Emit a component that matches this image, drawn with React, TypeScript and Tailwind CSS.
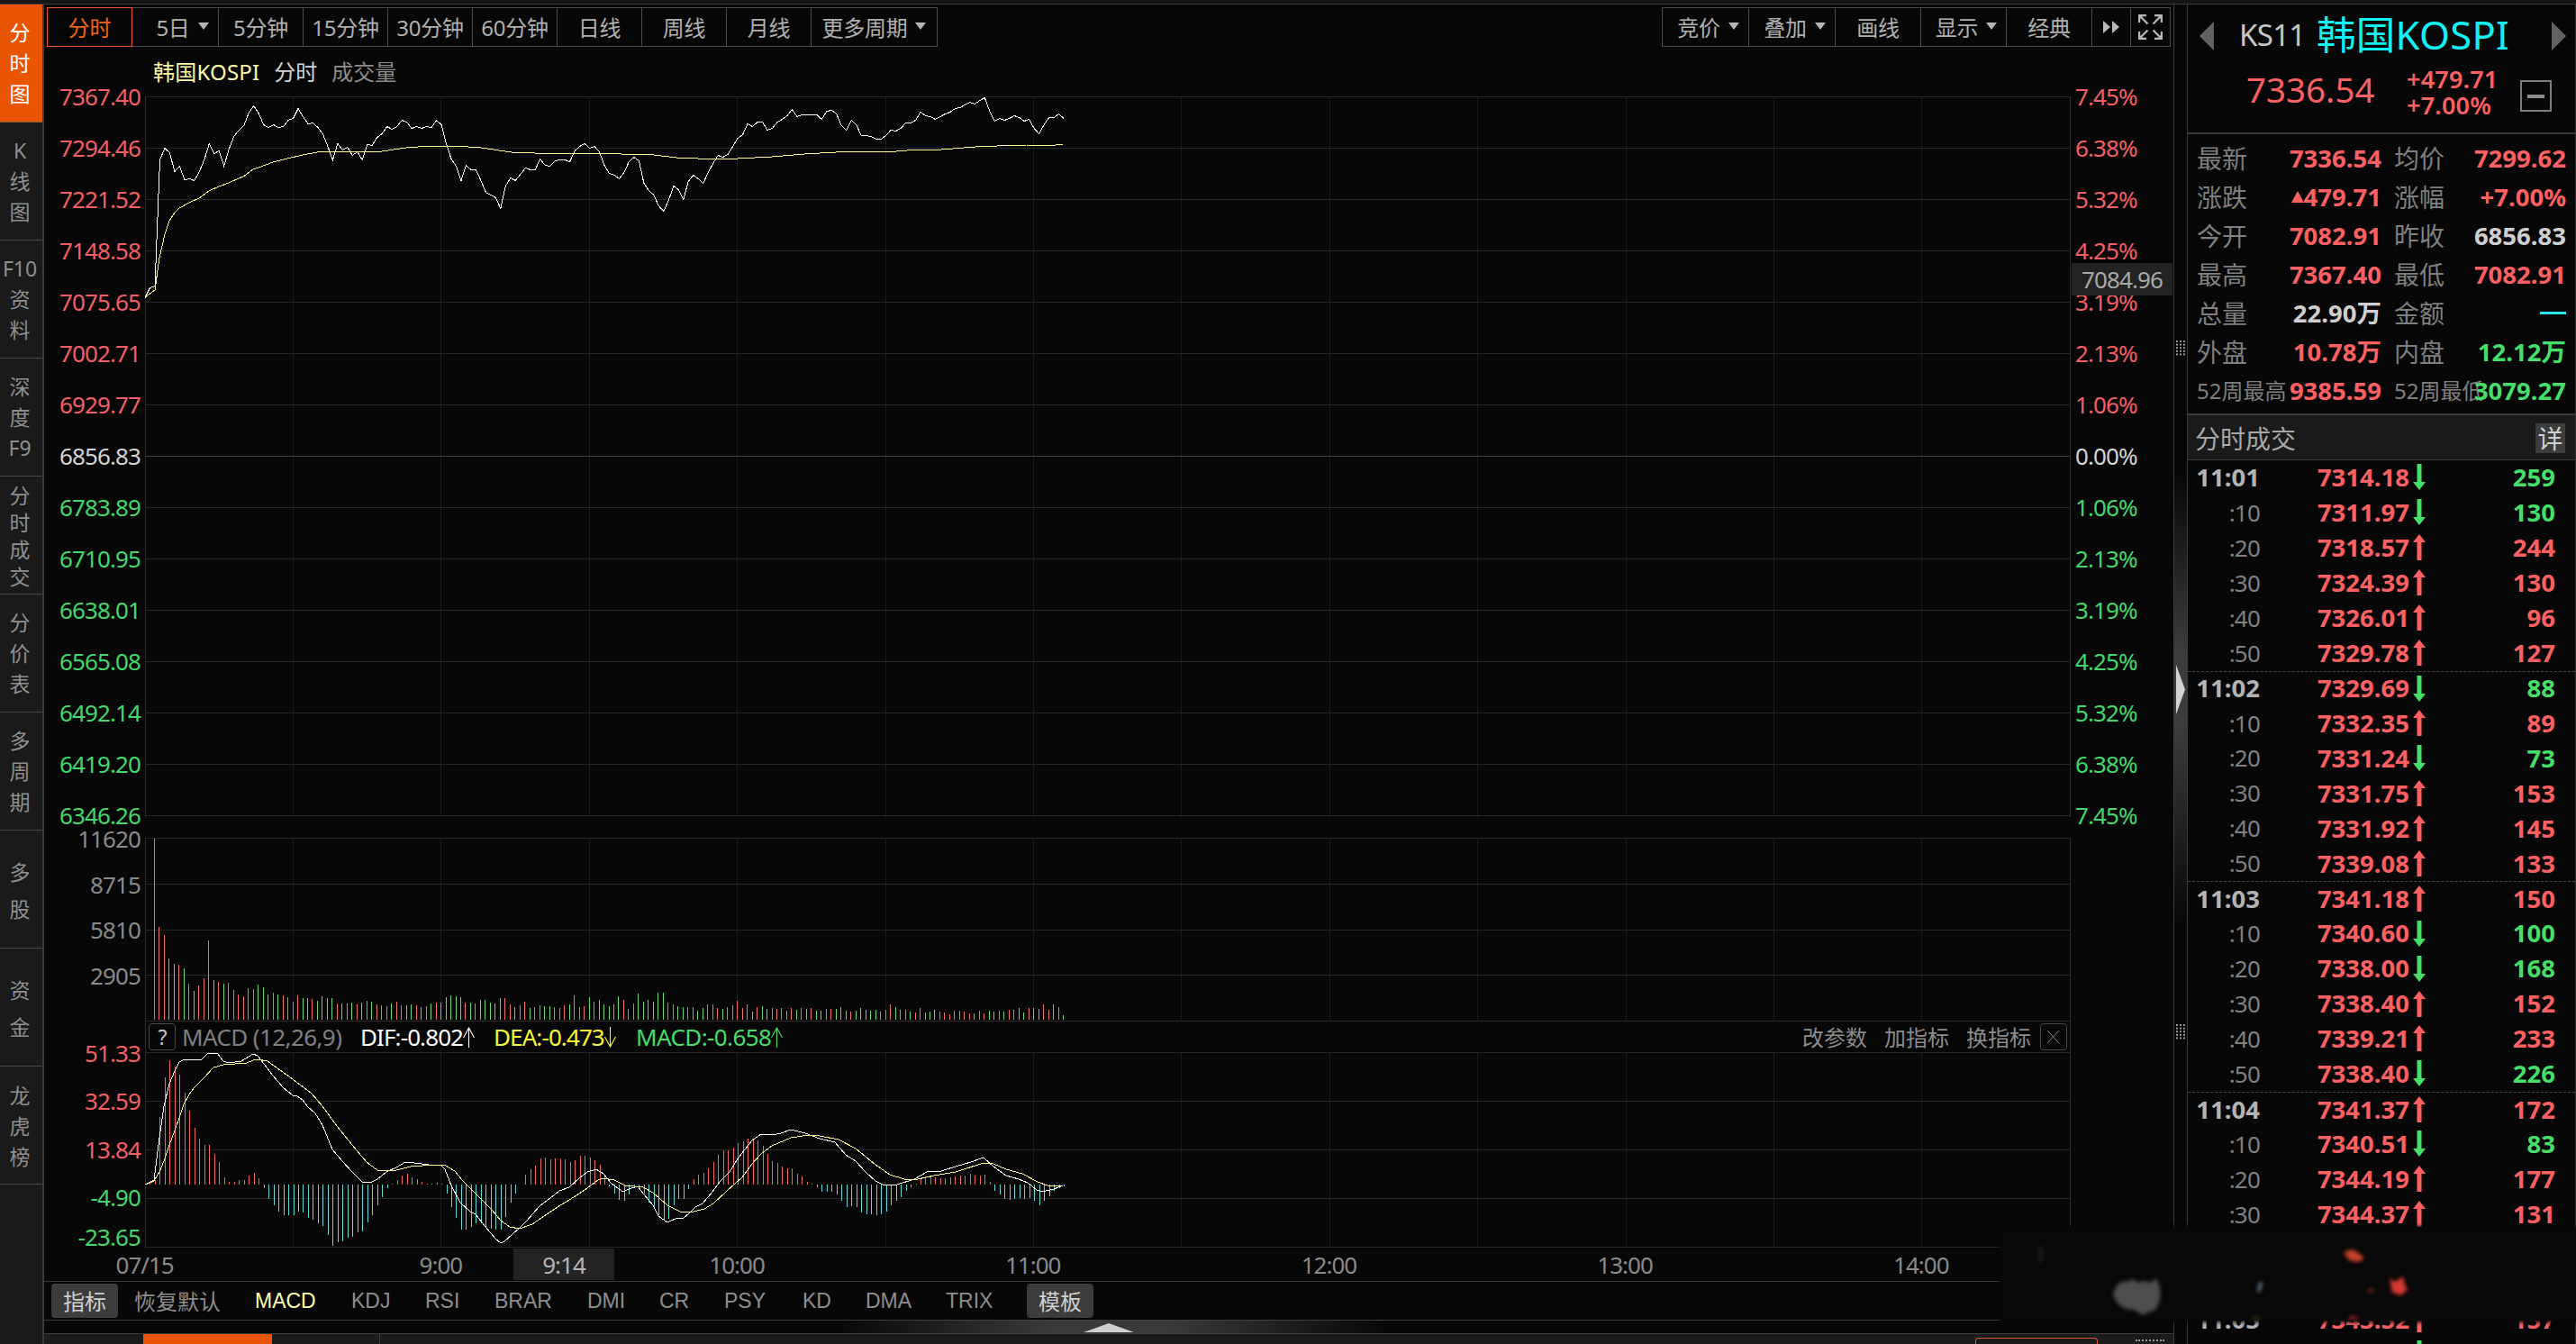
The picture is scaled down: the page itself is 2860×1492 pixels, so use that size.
import type { ReactNode } from "react";

interface Tick {
  time: string;
  price: string;
  up: boolean;
  volume: number;
}

interface Quote {
  label: string;
  value: string;
  color: string;
}

const RED = "#ff6062";
const GREEN = "#45df69";

// One minute on the time axis, in px
const STEP = 5.484;
const GRID_X = 164.4;
const CHART_W = 2138;

const SIDE_TABS = [
  { chars: ["K", "线", "图"], leading: "leading-[34px]" },
  { chars: ["F10", "资", "料"], leading: "leading-[34px]" },
  { chars: ["深", "度", "F9"], leading: "leading-[34px]" },
  { chars: ["分", "时", "成", "交"], leading: "leading-[30px] pt-px" },
  { chars: ["分", "价", "表"], leading: "leading-[34px]" },
  { chars: ["多", "周", "期"], leading: "leading-[34px]" },
  { chars: ["多", "股"], leading: "leading-[41px] pt-1" },
  { chars: ["资", "金"], leading: "leading-[41px] pt-1" },
  { chars: ["龙", "虎", "榜"], leading: "leading-[34px] pt-0.5" },
];

const PERIODS = [
  { label: "5日", width: "w-[96px] pl-4", caret: true },
  { label: "5分钟", width: "w-[94px]" },
  { label: "15分钟", width: "w-[94px]" },
  { label: "30分钟", width: "w-[94px]" },
  { label: "60分钟", width: "w-[94px]" },
  { label: "日线", width: "w-[94px]" },
  { label: "周线", width: "w-[94px]" },
  { label: "月线", width: "w-[94px]" },
  { label: "更多周期", width: "w-[140px]", caret: true },
];

const TOOLS = [
  { label: "竞价", width: "w-[96px] pl-1.5", caret: true },
  { label: "叠加", width: "w-[96px] pl-1.5", caret: true },
  { label: "画线", width: "w-[95px]" },
  { label: "显示", width: "w-[95px] pl-1.5", caret: true },
  { label: "经典", width: "w-[95px]" },
];

const PRICE_LABELS = [
  "7367.40", "7294.46", "7221.52", "7148.58", "7075.65", "7002.71", "6929.77", "6856.83",
  "6783.89", "6710.95", "6638.01", "6565.08", "6492.14", "6419.20", "6346.26",
];

const PERCENT_LABELS = [
  "7.45%", "6.38%", "5.32%", "4.25%", "3.19%", "2.13%", "1.06%", "0.00%",
  "1.06%", "2.13%", "3.19%", "4.25%", "5.32%", "6.38%", "7.45%",
];

const VOLUME_LABELS = ["11620", "8715", "5810", "2905"];
const HOURS = ["9:00", "10:00", "11:00", "12:00", "13:00", "14:00"];

// Distance below the top grid line, one entry per minute
const PRICE = [
  223, 212, 210, 70, 57, 62, 83, 77, 92, 91, 93, 83, 70, 52, 63, 60, 77, 58, 44, 37,
  32, 18, 10, 18, 31, 34, 31, 34, 33, 26, 24, 13, 22, 30, 29, 34, 41, 55, 70, 52,
  59, 56, 65, 61, 70, 53, 54, 45, 41, 33, 36, 33, 26, 28, 35, 33, 35, 33, 34, 26,
  31, 52, 69, 77, 93, 76, 81, 81, 93, 106, 109, 112, 124, 99, 90, 93, 86, 79, 81, 81,
  69, 76, 77, 71, 70, 70, 72, 60, 55, 52, 57, 55, 61, 76, 85, 87, 91, 84, 72, 67,
  71, 96, 104, 109, 121, 127, 115, 99, 103, 114, 94, 87, 91, 96, 84, 74, 65, 67, 64, 55,
  46, 42, 30, 33, 28, 28, 37, 35, 28, 25, 21, 14, 22, 20, 20, 20, 20, 25, 16, 15,
  19, 32, 37, 26, 31, 43, 43, 44, 47, 47, 43, 37, 38, 35, 29, 29, 26, 17, 21, 22,
  25, 22, 19, 17, 13, 12, 9, 6, 8, 4, 1, 16, 27, 24, 26, 24, 21, 23, 27, 25,
  35, 41, 31, 23, 23, 19, 24,
];

const AVERAGE =
  "0,223 11,215 16,179 22,153 27,138 33,129 38,124 49,118 60,113 71,105 82,100 93,96 104,91 109,89 120,81 126,79 142,73 158,69 175,65 197,61 263,61 290,57 316,55 345,55 373,57 407,62 433,63 515,63 529,64 550,64 565,65 590,68 614,69 658,69 696,67 732,64 767,62 794,61 834,61 858,59 884,59 922,56 946,55 979,54 1011,54 1019,53";

// Bar heights; negative means a falling minute
const VOLUME = [
  201, 103, 94, -68, -62, 61, -57, 40, -32, 38, 46, 88, -44, 42, -40, 41, 33, 28, 26, 35,
  34, -39, -36, -28, 30, -28, 27, 25, 20, 27, -24, -24, 23, -21, -26, -24, -24, 18, -18, 18,
  -19, 17, -19, 21, -20, 17, 16, 15, -18, 20, 16, -16, -17, 16, -14, 15, -18, 19, -19, -25,
  -27, -26, -25, 19, -19, 18, -22, -22, -19, -18, -24, 24, 17, -14, 16, 20, -13, 14, 16, -15,
  -15, 14, 13, 16, -17, 27, 14, 15, -25, 20, -22, -17, -15, -17, -26, 22, 12, 18, -29, -20,
  -22, -20, -30, -30, 19, 17, -15, -14, 14, 14, -10, -13, 17, 17, 13, -12, 14, 16, 21, 13,
  17, -9, 14, -15, -12, 13, 12, 13, 10, 13, -11, 13, -12, 13, -10, -10, 12, 12, -12, -14,
  -10, 9, -10, -13, -11, -10, -11, 9, 11, 17, -14, 11, 11, -9, 8, 13, -8, -9, -11, 9,
  8, 6, 10, 10, 9, 7, -7, 10, 7, -10, -9, 10, -9, 11, 11, -13, -8, 13, -13, -12,
  17, 11, -17, 14, -5,
];

const MACD_BARS = [
  0, 2, 5, 75, 119, 138, 131, 122, 102, 82, 63, 51, 44, 44, 34, 25, 8, 3, 3, 5,
  5, 10, 13, 7, -4, -16, -23, -30, -34, -34, -34, -30, -31, -37, -39, -43, -46, -56, -68, -64,
  -63, -59, -58, -53, -52, -42, -34, -23, -14, -4, 1, 5, 10, 12, 8, 6, 3, 1, 1, 2,
  1, -10, -25, -37, -50, -50, -47, -43, -43, -47, -49, -50, -50, -36, -20, -10, 0, 11, 17, 21,
  29, 30, 28, 29, 29, 28, 25, 27, 32, 32, 30, 27, 22, 10, -2, -10, -17, -18, -11, -4,
  -3, -10, -20, -27, -34, -40, -38, -23, -16, -16, -5, 6, 11, 13, 18, 25, 33, 38, 38, 41,
  46, 48, 51, 51, 49, 43, 34, 26, 24, 20, 18, 18, 12, 9, 3, 1, -3, -8, -8, -8,
  -11, -18, -25, -24, -25, -31, -33, -33, -34, -33, -30, -23, -18, -14, -7, -3, 1, 6, 9, 9,
  8, 7, 7, 8, 9, 10, 10, 12, 10, 10, 11, 3, -7, -11, -16, -17, -16, -15, -16, -15,
  -18, -23, -18, -13, -7, -4, -2,
];

const DIF =
  "0,147 10,142 13,118 16,95 21,60 27,35 33,21 38,11 44,8 50,8 55,9 63,8 70,1 81,2 87,10 93,12 107,10 120,2 125,4 132,13 142,26 153,39 164,48 169,49 175,53 180,60 189,68 197,81 208,108 219,121 230,133 241,144 252,144 258,141 268,133 279,128 289,122 299,123 315,125 328,125 333,130 340,148 350,167 361,177 367,180 378,194 389,207 395,212 399,210 416,195 424,187 438,171 450,162 460,154 471,150 482,140 491,133 501,130 509,135 517,145 526,152 531,155 537,152 547,149 554,158 564,170 570,182 580,189 591,184 597,185 605,178 611,172 619,168 630,155 639,143 649,133 657,120 666,108 674,98 684,91 696,92 706,90 717,86 733,90 749,96 766,100 778,114 789,121 800,133 811,143 821,148 835,147 854,141 868,133 884,132 900,127 917,122 931,117 942,127 956,137 970,141 980,145 990,153 996,155 1009,152 1019,148";

const DEA =
  "0,147 10,143 16,133 21,121 27,103 33,87 38,73 43,58 49,47 55,39 66,28 76,17 87,14 113,12 120,9 125,8 136,10 150,20 164,30 185,46 197,60 213,82 230,103 246,122 258,131 264,132 279,131 295,127 321,125 332,125 344,132 352,142 368,158 385,175 395,187 405,194 416,196 430,191 443,182 458,172 476,161 491,151 503,142 509,140 521,142 533,148 553,150 564,156 580,170 594,177 605,178 621,174 631,168 646,154 663,139 674,124 684,113 696,104 717,95 737,92 749,93 770,97 789,107 811,125 827,136 843,141 858,141 876,137 900,133 931,123 942,124 956,130 974,135 991,144 1002,148 1019,149";

const INDICATORS = [
  { label: "KDJ", width: "w-[82px]" },
  { label: "RSI", width: "w-[77px]" },
  { label: "BRAR", width: "w-[103px]" },
  { label: "DMI", width: "w-[80px]" },
  { label: "CR", width: "w-[72px]" },
  { label: "PSY", width: "w-[87px]" },
  { label: "KD", width: "w-[70px]" },
  { label: "DMA", width: "w-[89px]" },
  { label: "TRIX", width: "w-[90px]" },
];

const QUOTES: [Quote, Quote][] = [
  [
    { label: "最新", value: "7336.54", color: "text-[#ff6062]" },
    { label: "均价", value: "7299.62", color: "text-[#ff6062]" },
  ],
  [
    { label: "涨跌", value: "479.71", color: "text-[#ff6062]" },
    { label: "涨幅", value: "+7.00%", color: "text-[#ff6062]" },
  ],
  [
    { label: "今开", value: "7082.91", color: "text-[#ff6062]" },
    { label: "昨收", value: "6856.83", color: "text-[#d0d0d0]" },
  ],
  [
    { label: "最高", value: "7367.40", color: "text-[#ff6062]" },
    { label: "最低", value: "7082.91", color: "text-[#ff6062]" },
  ],
  [
    { label: "总量", value: "22.90万", color: "text-[#d0d0d0]" },
    { label: "金额", value: "", color: "text-[#2ee6ea]" },
  ],
  [
    { label: "外盘", value: "10.78万", color: "text-[#ff6062]" },
    { label: "内盘", value: "12.12万", color: "text-[#45df69]" },
  ],
];

function tick(time: string, price: string, up: boolean, volume: number): Tick {
  return { time, price, up, volume };
}

const TICKS: Tick[] = [
  tick("11:01", "7314.18", false, 259),
  tick(":10", "7311.97", false, 130),
  tick(":20", "7318.57", true, 244),
  tick(":30", "7324.39", true, 130),
  tick(":40", "7326.01", true, 96),
  tick(":50", "7329.78", true, 127),
  tick("11:02", "7329.69", false, 88),
  tick(":10", "7332.35", true, 89),
  tick(":20", "7331.24", false, 73),
  tick(":30", "7331.75", true, 153),
  tick(":40", "7331.92", true, 145),
  tick(":50", "7339.08", true, 133),
  tick("11:03", "7341.18", true, 150),
  tick(":10", "7340.60", false, 100),
  tick(":20", "7338.00", false, 168),
  tick(":30", "7338.40", true, 152),
  tick(":40", "7339.21", true, 233),
  tick(":50", "7338.40", false, 226),
  tick("11:04", "7341.37", true, 172),
  tick(":10", "7340.51", false, 83),
  tick(":20", "7344.19", true, 177),
  tick(":30", "7344.37", true, 131),
];

function Caret() {
  return (
    <svg width="12" height="8" className="shrink-0 -mt-1 fill-[#b4b4b4]">
      <path d="M0 0H12L6 8Z" />
    </svg>
  );
}

function ToolButton({ label, width, caret }: { label: string; width: string; caret?: boolean }) {
  return (
    <button
      className={`${width} h-full shrink-0 flex items-center justify-center ${
        caret ? "gap-[9px]" : ""
      } border-r border-[#4b4b4b] pt-0.5 text-[24px] tracking-[-0.3px] leading-none whitespace-nowrap text-[#b0b0b0]`}
    >
      {label}
      {caret && <Caret />}
    </button>
  );
}

function Grid({ height, rows, gap, bright }: { height: number; rows: number; gap: number; bright?: number }) {
  return (
    <g shapeRendering="crispEdges">
      {Array.from({ length: 12 }, (_, i) => (
        <line key={i} x1={(i + 1) * GRID_X} x2={(i + 1) * GRID_X} y1={0} y2={height} stroke="#191a1a" />
      ))}
      {Array.from({ length: rows }, (_, i) => (
        <line
          key={i}
          x1={0}
          x2={CHART_W}
          y1={i * gap + 0.5}
          y2={i * gap + 0.5}
          stroke={i === bright ? "#454545" : "#262727"}
        />
      ))}
      <line x1={0.5} x2={0.5} y1={0} y2={height} stroke="#2e3030" />
      <line x1={CHART_W - 0.5} x2={CHART_W - 0.5} y1={0} y2={height} stroke="#2e3030" />
    </g>
  );
}

function Curve({ points, color }: { points: string; color: string }) {
  return <polyline points={points} fill="none" stroke={color} strokeWidth="1" shapeRendering="crispEdges" />;
}

function PriceChart() {
  const points = PRICE.map((y, i) => `${(i * STEP).toFixed(1)},${y + 0.5}`).join(" ");
  return (
    <svg width={CHART_W} height={800} className="block shrink-0">
      <Grid height={800} rows={15} gap={57} bright={7} />
      <Curve points={points} color="#ffffff" />
      <Curve points={AVERAGE} color="#fbf98e" />
    </svg>
  );
}

function VolumeChart() {
  return (
    <svg width={CHART_W} height={204} className="mt-[23px] block shrink-0">
      <Grid height={204} rows={5} gap={50.75} />
      <g shapeRendering="crispEdges">
        {VOLUME.map((v, i) => (
          <rect
            key={i}
            x={Math.round(10 + i * STEP)}
            y={202 - Math.abs(v)}
            width={1}
            height={Math.abs(v)}
            fill={v > 0 ? "#f0706c" : "#62d877"}
          />
        ))}
      </g>
    </svg>
  );
}

function MacdChart() {
  return (
    <svg width={CHART_W} height={217} className="block shrink-0">
      <Grid height={217} rows={5} gap={54} />
      <g shapeRendering="crispEdges">
        {MACD_BARS.map((v, i) => (
          <rect
            key={i}
            x={Math.round(i * STEP)}
            y={v > 0 ? 147 - v : 147}
            width={1}
            height={Math.abs(v)}
            fill={v > 0 ? "#f0655f" : "#5ed8da"}
          />
        ))}
      </g>
      <Curve points={DIF} color="#ffffff" />
      <Curve points={DEA} color="#fbf98e" />
    </svg>
  );
}

function ThinArrow({ up, color }: { up: boolean; color: string }) {
  return (
    <svg width="13" height="23" fill="none" stroke={color} strokeWidth="1.1">
      <path d={up ? "M6.5 23V1M0.5 12L6.5 1L12.5 12" : "M6.5 0V22M0.5 11L6.5 22L12.5 11"} />
    </svg>
  );
}

function MacdHeader() {
  return (
    <div className="h-[34px] shrink-0 flex items-center border-x border-[#2e3030] pl-[3px] pr-[3px] text-[26px] tracking-[-0.9px] leading-none">
      <span className="w-[30px] h-[30px] flex items-center justify-center rounded border border-[#484848] text-[23px] text-[#c8c8c8]">
        ?
      </span>
      <span className="ml-[7px] w-[198px] whitespace-nowrap tracking-[-0.6px] text-[#808080]">MACD (12,26,9)</span>
      <span className="w-[148px] flex items-center whitespace-nowrap text-white">
        DIF:-0.802
        <ThinArrow up color="#ffffff" />
      </span>
      <span className="w-[158px] flex items-center whitespace-nowrap text-[#fbfb2e]">
        DEA:-0.473
        <ThinArrow up={false} color="#fbfb2e" />
      </span>
      <span className="flex items-center whitespace-nowrap tracking-[-0.6px] text-[#45df69]">
        MACD:-0.658
        <ThinArrow up color="#45df69" />
      </span>
      <span className="ml-auto flex items-center gap-[19px] pt-px text-[24px] tracking-normal text-[#8c8c8c]">
        <span>改参数</span>
        <span>加指标</span>
        <span>换指标</span>
      </span>
      <svg width="30" height="30" className="ml-[10px]" fill="none">
        <rect x="0.5" y="0.5" width="29" height="29" rx="3" stroke="#4a4a4a" />
        <path d="M8 8L21 22M21 8L8 22" stroke="#8a8a8a" />
      </svg>
    </div>
  );
}

function AxisLabel({ children, className }: { children: ReactNode; className: string }) {
  return <div className={`flex items-center text-[26px] tracking-[-0.9px] leading-none ${className}`}>{children}</div>;
}

function sideColor(index: number): string {
  if (index === 7) return "text-[#d4d4d4]";
  return index < 7 ? "text-[#f55f64]" : "text-[#42d96a]";
}

function LeftAxis() {
  return (
    <div className="w-[112px] shrink-0 pr-[5px]">
      <div className="-mt-[29px]">
        {PRICE_LABELS.map((label, i) => (
          <AxisLabel key={label} className={`h-[57px] justify-end ${sideColor(i)}`}>
            {label}
          </AxisLabel>
        ))}
      </div>
      <div className="-mt-[27px]">
        {VOLUME_LABELS.map((label) => (
          <AxisLabel key={label} className="h-[50.5px] justify-end text-[#8a8a8a]">
            {label}
          </AxisLabel>
        ))}
      </div>
      <div className="mt-[34px]">
        <AxisLabel className="h-[53.5px] justify-end text-[#f55f64]">51.33</AxisLabel>
        <AxisLabel className="h-[53.5px] justify-end text-[#f55f64]">32.59</AxisLabel>
        <AxisLabel className="h-[53.5px] justify-end text-[#f55f64]">13.84</AxisLabel>
        <AxisLabel className="h-[53.5px] justify-end text-[#42d96a]">-4.90</AxisLabel>
        <AxisLabel className="h-[34px] justify-end text-[#42d96a]">-23.65</AxisLabel>
      </div>
    </div>
  );
}

function RightAxis() {
  return (
    <div className="relative w-[114px] shrink-0 pl-[5px]">
      <div className="-mt-[29px]">
        {PERCENT_LABELS.map((label, i) => (
          <AxisLabel key={i} className={`h-[57px] ${sideColor(i)}`}>
            {label}
          </AxisLabel>
        ))}
      </div>
      <div className="absolute left-[1px] top-[185px] w-[112px] h-[36px] flex items-center justify-center bg-[#232323] text-[26px] tracking-[-0.9px] leading-none text-[#a8a8a8]">
        7084.96
      </div>
    </div>
  );
}

function Toolbar() {
  return (
    <div className="mt-[3px] ml-[3px] mr-[3px] h-[44px] flex justify-between">
      <div className="flex border-y border-[#4b4b4b]">
        <button className="-my-px w-[95px] border border-[#e8552f] pt-0.5 text-[24px] leading-none text-[#f26414]">
          分时
        </button>
        {PERIODS.map((p) => (
          <ToolButton key={p.label} {...p} />
        ))}
      </div>
      <div className="flex border-y border-l border-[#4b4b4b]">
        {TOOLS.map((t) => (
          <ToolButton key={t.label} {...t} />
        ))}
        <button className="w-[43px] flex items-center justify-center border-r border-[#4b4b4b]">
          <svg width="18" height="14" className="fill-[#b8b8b8]">
            <path d="M0 0L8 7L0 14ZM10 0L18 7L10 14Z" />
          </svg>
        </button>
        <button className="w-[44px] flex items-center justify-center border-r border-[#4b4b4b]">
          <svg width="27" height="28" fill="none" stroke="#b8b8b8" strokeWidth="2.2">
            <path
              d="M1.1 9V1.1H9M1.5 1.5L10.5 10.5M18 1.1H25.9V9M25.5 1.5L16.5 10.5M1.1 19V26.9H9M1.5 26.5L10.5 17.5M18 26.9H25.9V19M25.5 26.5L16.5 17.5"
            />
            <path
              stroke="none"
              fill="#b8b8b8"
              d="M0 0H7L0 7ZM27 0V7L20 0ZM0 28V21L7 28ZM27 28H20L27 21Z"
            />
          </svg>
        </button>
      </div>
    </div>
  );
}

function TimeAxis() {
  return (
    <div className="relative h-[37px] shrink-0 flex items-center text-[26px] tracking-[-1px] leading-none text-[#8a8a8a]">
      <span className="w-[276px] pr-[52.8px] text-center">07/15</span>
      {HOURS.map((h) => (
        <span key={h} className="w-[328.7px] text-center">
          {h}
        </span>
      ))}
      <span className="absolute left-[521px] top-px w-[112px] h-[35px] flex items-center justify-center bg-[#232323] text-[#b4b4b4]">
        9:14
      </span>
    </div>
  );
}

function IndicatorBar() {
  return (
    <div className="h-[44px] shrink-0 flex items-center border-y border-[#3d3d3d] pl-2 text-[24px] leading-none text-[#8e8e8e]">
      <button className="w-[74px] h-[38px] rounded-sm bg-[#3c3c3c] pt-0.5 text-[#d0d0d0]">指标</button>
      <span className="ml-[18px] w-[134px] pt-0.5">恢复默认</span>
      <div className="flex font-['Liberation_Sans',sans-serif] text-[23px]">
        <span className="w-[107px] text-[#fdfda6]">MACD</span>
        {INDICATORS.map((item) => (
          <span key={item.label} className={item.width}>
            {item.label}
          </span>
        ))}
      </div>
      <button className="w-[74px] h-[38px] rounded-sm bg-[#3c3c3c] pt-0.5 text-[#d0d0d0]">模板</button>
    </div>
  );
}

function BottomBar() {
  return (
    <>
      <div className="h-[14px] shrink-0 flex justify-center bg-[linear-gradient(90deg,transparent_880px,#3a3a3a_1120px,#3a3a3a_1245px,transparent_1490px)]">
        <svg width="56" height="10" className="mt-[3px] fill-[#cfcfcf]">
          <path d="M0 10L28 0L56 10Z" />
        </svg>
      </div>
      <div className="flex-1 flex border-t border-[#3d3d3d] bg-[#1b1b1b]">
        <div className="ml-[110px] w-[143px] bg-[#ea5504]" />
        <div className="w-[120px] border-r border-[#3d3d3d]" />
        <div className="ml-auto mt-[4px] w-[136px] rounded-t border-x border-t border-[#d85a30]" />
        <div className="mt-[6px] ml-[42px] mr-[10px] w-[32px] border-t-2 border-dotted border-[#9a9a9a]" />
      </div>
    </>
  );
}

function Grip() {
  return (
    <svg width="11" height="17" className="fill-[#9a9a9a]">
      {[0, 1, 2].map((c) =>
        [0, 1, 2, 3, 4].map((r) => <rect key={`${c}${r}`} x={c * 4} y={r * 3.6} width="2" height="2" />)
      )}
    </svg>
  );
}

function Splitter() {
  return (
    <div className="w-[16px] shrink-0 flex flex-col items-center border-x border-[#3b3b3b] bg-[linear-gradient(180deg,transparent_520px,#3c3c3c_720px,#3c3c3c_800px,transparent_1020px)]">
      <div className="mt-[373px] h-[360px]">
        <Grip />
      </div>
      <svg width="10" height="55" className="fill-[#d2d2d2]">
        <path d="M0 0L10 27.5L0 55Z" />
      </svg>
      <div className="mt-[344px]">
        <Grip />
      </div>
    </div>
  );
}

function QuoteHeader() {
  return (
    <div className="h-[144px] shrink-0 border-b-2 border-[#3b3b3b]">
      <div className="h-[70px] flex items-center pl-[13px] pr-[10px]">
        <svg width="16" height="32" className="fill-[#626262]">
          <path d="M16 0V32L0 16Z" />
        </svg>
        <span className="ml-[28px] w-[86px] pb-[3px] text-[33px] tracking-[-0.7px] leading-none text-[#c8c8c8]">
          KS11
        </span>
        <span className="whitespace-nowrap pb-[3px] text-[43.5px] leading-none tracking-[0.3px] text-[#12f2f4]">
          韩国KOSPI
        </span>
        <svg width="16" height="32" className="ml-auto fill-[#626262]">
          <path d="M0 0V32L16 16Z" />
        </svg>
      </div>
      <div className="flex pl-[65px] text-[#ff6062]">
        <span className="w-[178px] pt-[5px] text-[38.5px] leading-[38px]">7336.54</span>
        <span className="-mt-0.5 w-[126px] text-[27px] font-semibold leading-[29px] tracking-[0.2px]">
          +479.71
          <br />
          +7.00%
        </span>
        <span className="mt-[14px] w-[35px] h-[35px] flex items-center justify-center border-2 border-[#7e7e7e]">
          <span className="w-[19px] h-[4px] bg-[#8e8e8e]" />
        </span>
      </div>
    </div>
  );
}

function QuoteGrid() {
  return (
    <div className="h-[312px] shrink-0 border-b-2 border-[#3b3b3b] pt-[5px] pl-[10px] pr-[10px] text-[27.5px] leading-none">
      {QUOTES.map(([a, b]) => (
        <div key={a.label} className="h-[43px] flex items-center">
          <span className="w-[78px] text-[28px] text-[#7f7f7f]">{a.label}</span>
          <span className={`w-[127px] flex items-center justify-end font-bold ${a.color}`}>
            {a.label === "涨跌" && (
              <svg width="14" height="13" className="fill-[#ff6062]">
                <path d="M7 0L14 13H0Z" />
              </svg>
            )}
            {a.value}
          </span>
          <span className="ml-[14px] w-[78px] text-[28px] text-[#7f7f7f]">{b.label}</span>
          <span className={`flex-1 flex justify-end font-bold ${b.color}`}>
            {b.value || <span className="w-[29px] h-[3px] bg-[#2ee6ea]" />}
          </span>
        </div>
      ))}
      <div className="h-[43px] flex items-center">
        <span className="w-[78px] whitespace-nowrap text-[24px] text-[#7f7f7f]">52周最高</span>
        <span className="w-[127px] text-right font-bold text-[#ff6062]">9385.59</span>
        <span className="ml-[14px] w-[78px] whitespace-nowrap text-[24px] text-[#7f7f7f]">52周最低</span>
        <span className="relative flex-1 text-right font-bold text-[#45df69]">3079.27</span>
      </div>
    </div>
  );
}

function TickArrow({ up }: { up: boolean }) {
  return (
    <svg width="14" height="29" className="block" fill={up ? RED : GREEN}>
      <path d={up ? "M7 0L14 9H9.5V29H4.5V9H0Z" : "M7 29L14 20H9.5V0H4.5V20H0Z"} />
    </svg>
  );
}

function TickRow({ row, divider }: { row: Tick; divider: boolean }) {
  const isMinute = !row.time.startsWith(":");
  return (
    <div
      className={`h-[38.95px] shrink-0 flex items-center pr-[22px] pb-px text-[27.5px] font-bold leading-none ${
        divider ? "border-t border-dashed border-[#474747]" : ""
      }`}
    >
      <span
        className={`w-[80px] text-right ${
          isMinute ? "text-[#b4b4b4]" : "text-[26px] tracking-[-0.8px] font-normal text-[#808080]"
        }`}
      >
        {row.time}
      </span>
      <span className="w-[166px] text-right text-[#ff6062]">{row.price}</span>
      <span className="ml-[4px]">
        <TickArrow up={row.up} />
      </span>
      <span className={`flex-1 text-right ${row.up ? "text-[#ff6062]" : "text-[#45df69]"}`}>{row.volume}</span>
    </div>
  );
}

function QuotePanel() {
  return (
    <div className="w-[431px] shrink-0 flex flex-col overflow-hidden border-r border-[#333333]">
      <QuoteHeader />
      <QuoteGrid />
      <div className="h-[50px] shrink-0 flex items-center justify-between border-b border-[#3b3b3b] bg-[#1a1a1a] pl-2 pr-[11px] pt-0.5 text-[28px] leading-none text-[#a8a8a8]">
        分时成交
        <span className="w-[33px] h-[33px] flex items-center justify-center bg-[#3c3c3c] text-[#d0d0d0]">详</span>
      </div>
      {TICKS.map((row, i) => (
        <TickRow key={i} row={row} divider={i > 0 && i % 6 === 0} />
      ))}
      <div className="h-[77.9px] shrink-0" />
      <TickRow row={tick("11:05", "7343.52", true, 157)} divider />
      <div className="flex shrink-0 pl-[250px] pt-[4px]">
        <TickArrow up={false} />
      </div>
    </div>
  );
}

function Sidebar() {
  return (
    <div className="w-[49px] shrink-0 border-r-2 border-[#3c3c3c] bg-[#1a1a1a] text-[23px]">
      <div className="h-[131px] flex flex-col justify-center border-b border-[#8a5a3c] bg-[#ea5504] pr-[3px] text-center leading-[34px] text-white">
        <span>分</span>
        <span>时</span>
        <span>图</span>
      </div>
      {SIDE_TABS.map((tab, i) => (
        <div
          key={i}
          className={`h-[131px] flex flex-col justify-center border-b border-[#4a4a4a] pr-[3px] text-center text-[#8f8f8f] ${tab.leading}`}
        >
          {tab.chars.map((c) => (
            <span key={c}>{c}</span>
          ))}
        </div>
      ))}
    </div>
  );
}

// Erased patch over the lower right corner
function Patch() {
  return (
    <div className="absolute left-[2222px] top-[1363px] w-[638px] h-[103px] bg-[#080808] shadow-[0_0_4px_2px_#080808]">
      <svg width="638" height="103">
        <g className="blur-[2px]">
          <path
            d="M124 73C128 62 134 58 140 60L146 57L152 61L158 59L166 61L172 56L176 66C178 80 174 92 166 93L156 97L148 91C136 92 126 84 124 73Z"
            fill="#4e4e4e"
          />
          <path d="M380 27L390 24L398 29L403 34L396 38L386 36Z" fill="#c8412c" />
          <path d="M431 56L437 60L446 54L448 64L451 68L444 75L434 72Z" fill="#d63a34" />
          <path d="M406 72L411 66L414 71Z" fill="#8c2620" />
          <path d="M284 72L286 61L290 60L288 70Z" fill="#5f7d88" />
          <path d="M41 22L46 20L46 38L42 40Z" fill="#1c1c1c" />
          <path d="M276 102L282 98L290 102Z" fill="#3a3410" />
          <path d="M383 102L390 97L398 102Z" fill="#8c2620" />
        </g>
      </svg>
    </div>
  );
}

export default function App() {
  return (
    <div className="relative w-[2860px] h-[1492px] flex flex-col overflow-hidden bg-[#070707] font-['Noto_Sans','Noto_Sans_CJK_SC',sans-serif]">
      <div className="h-[5px] shrink-0 border-b border-[#3d3d3d] bg-[#151515]" />
      <div className="flex-1 min-h-0 flex">
        <Sidebar />
        <div className="w-[2364px] shrink-0 flex flex-col">
          <Toolbar />
          <div className="h-[55px] shrink-0 flex items-center gap-[16px] pl-[121px] text-[24px] leading-none">
            <span className="tracking-[0.2px] text-[#fbfba8]">韩国KOSPI</span>
            <span className="text-[#d4d4d4]">分时</span>
            <span className="text-[#8c8c8c]">成交量</span>
          </div>
          <div className="h-[1278px] shrink-0 flex">
            <LeftAxis />
            <div className="w-[2138px] shrink-0 flex flex-col">
              <PriceChart />
              <VolumeChart />
              <MacdHeader />
              <MacdChart />
            </div>
            <RightAxis />
          </div>
          <TimeAxis />
          <IndicatorBar />
          <BottomBar />
        </div>
        <Splitter />
        <QuotePanel />
      </div>
      <Patch />
    </div>
  );
}
